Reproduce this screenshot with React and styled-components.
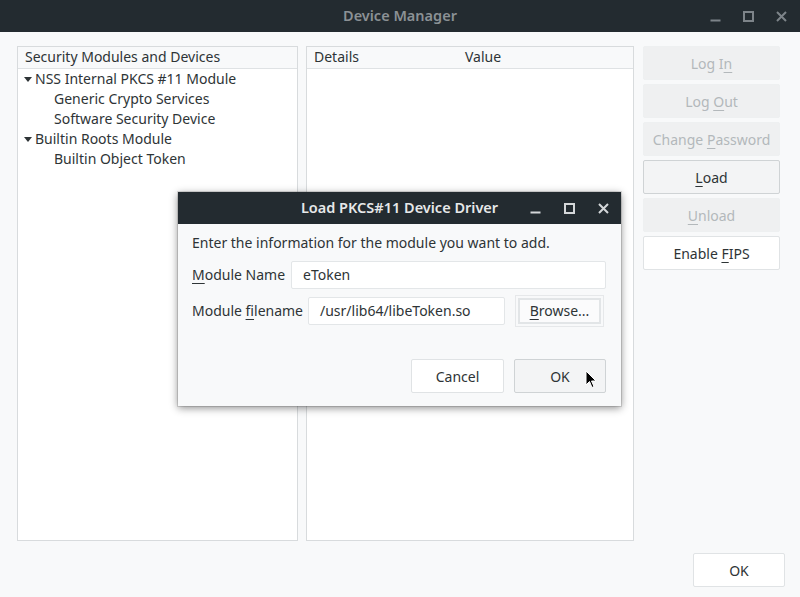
import React from "react";
import styled, { createGlobalStyle } from "styled-components";

const Global = createGlobalStyle`
  html, body { margin: 0; padding: 0; }
  body { font-family: "Noto Sans", "Open Sans", sans-serif; background: #f8f9fa; }
`;

const Window = styled.div`
  position: relative;
  width: 800px;
  height: 597px;
  background: #f8f9fa;
  display: flex;
  flex-direction: column;
  overflow: hidden;
  font-size: 14px;
  color: #2e3436;
`;

const TitleBar = styled.div`
  height: 32px;
  flex: none;
  box-sizing: border-box;
  padding-bottom: 2px;
  background: ${(p) => p.$bg || "#232b30"};
  color: ${(p) => p.$fg || "#8b9195"};
  display: flex;
  align-items: center;
  justify-content: center;
  position: relative;
  font-size: 14.5px;
  font-weight: 600;
`;

const TitleText = styled.span`
  margin-left: ${(p) => p.$offset || 0}px;
`;

const Controls = styled.div`
  position: absolute;
  right: ${(p) => p.$right || 12}px;
  top: 0;
  height: 100%;
  display: flex;
  align-items: center;
  gap: ${(p) => p.$gap || 23}px;
  color: ${(p) => p.$color || "#7d8489"};
`;

const Icon = styled.svg`
  width: 11px;
  height: 11px;
  display: block;
`;

const WinControls = ({ color, right, gap }) => (
  <Controls $color={color} $right={right} $gap={gap}>
    <Icon viewBox="0 0 11 11">
      <rect x="0.5" y="8.5" width="10" height="2" fill="currentColor" />
    </Icon>
    <Icon viewBox="0 0 11 11">
      <rect x="1" y="1" width="9" height="9" fill="none" stroke="currentColor" strokeWidth="2" />
    </Icon>
    <Icon viewBox="0 0 11 11">
      <path d="M1 1 L10 10 M10 1 L1 10" stroke="currentColor" strokeWidth="2" />
    </Icon>
  </Controls>
);

const Body = styled.div`
  flex: 1;
  display: flex;
  flex-direction: column;
  padding: 14px 16px 11px 17px;
`;

const Main = styled.div`
  display: flex;
  height: 495px;
`;

const Panel = styled.div`
  width: ${(p) => p.$w}px;
  margin-right: ${(p) => p.$mr || 0}px;
  background: #ffffff;
  border: 1px solid #d8dbdd;
  box-sizing: border-box;
  display: flex;
  flex-direction: column;
`;

const HeaderRow = styled.div`
  height: 22px;
  box-sizing: border-box;
  padding-bottom: 3px;
  background: #f8f9fa;
  border-bottom: 1px solid #dfe2e4;
  display: flex;
  align-items: center;
  padding-left: 7px;
  color: #2e3436;
`;

const HeaderCell = styled.span`
  width: ${(p) => (p.$w ? p.$w + "px" : "auto")};
`;

const Tree = styled.div`
  display: flex;
  flex-direction: column;
`;

const Row = styled.div`
  height: 20px;
  box-sizing: border-box;
  padding-bottom: 2px;
  display: flex;
  align-items: center;
  padding-left: ${(p) => (p.$level ? 36 : 6)}px;
  color: #2e3436;
`;

const Expander = styled.span`
  width: 0;
  height: 0;
  border-left: 4.5px solid transparent;
  border-right: 4.5px solid transparent;
  border-top: 5px solid #2e3436;
  margin-right: 3px;
  margin-top: 2px;
`;

const Buttons = styled.div`
  margin-left: 9px;
  width: 137px;
  display: flex;
  flex-direction: column;
  gap: 4px;
`;

const Button = styled.div`
  height: ${(p) => p.$h || 34}px;
  width: ${(p) => (p.$w ? p.$w + "px" : "auto")};
  box-sizing: border-box;
  display: flex;
  align-items: center;
  justify-content: center;
  border-radius: 2px;
  border: 1px solid
    ${(p) =>
      p.$variant === "disabled"
        ? "#eef0f1"
        : p.$variant === "active"
        ? "#cfd3d5"
        : "#e0e3e5"};
  background: ${(p) =>
    p.$variant === "disabled"
      ? "#eff0f1"
      : p.$variant === "active"
      ? "#f3f4f5"
      : "#ffffff"};
  color: ${(p) => (p.$variant === "disabled" ? "#b3b8bb" : "#2e3436")};
  font-size: 14px;
`;

const U = styled.u`
  text-decoration-thickness: 1px;
  text-underline-offset: 3px;
`;

const Footer = styled.div`
  display: flex;
  justify-content: flex-end;
  margin-top: 12px;
  margin-right: -1px;
`;

const Dialog = styled.div`
  position: absolute;
  left: 178px;
  top: 192px;
  width: 443px;
  height: 214px;
  background: #f8f9fa;
  box-shadow: 0 2px 8px rgba(0, 0, 0, 0.45), 0 0 0 1px rgba(0, 0, 0, 0.12);
  display: flex;
  flex-direction: column;
`;

const DialogBody = styled.div`
  padding: 8px 15px 13px 14px;
  display: flex;
  flex-direction: column;
  flex: 1;
`;

const Intro = styled.div`
  height: 22px;
  box-sizing: border-box;
  padding-bottom: 2px;
  display: flex;
  align-items: center;
  margin-bottom: 7px;
`;

const FieldRow = styled.div`
  display: flex;
  align-items: center;
  margin-bottom: ${(p) => p.$mb || 0}px;
`;

const Label = styled.span`
  width: ${(p) => p.$w}px;
  flex: none;
  padding-bottom: 2px;
`;

const Input = styled.div`
  width: ${(p) => p.$w}px;
  height: 28px;
  box-sizing: border-box;
  border: 1px solid #e3e6e8;
  background: #ffffff;
  display: flex;
  align-items: center;
  padding-left: 11px;
  padding-bottom: 2px;
  border-radius: 2px;
`;

const BrowseFrame = styled.div`
  margin-left: 10px;
  padding: 2px;
  border: 1px solid #e6e8ea;
  background: #f8f9fa;
`;

const BrowseButton = styled.div`
  width: 83px;
  height: 26px;
  box-sizing: border-box;
  padding-bottom: 2px;
  border: 2px solid #e2e5e7;
  background: #fbfbfc;
  display: flex;
  align-items: center;
  justify-content: center;
`;

const DialogActions = styled.div`
  margin-top: auto;
  display: flex;
  justify-content: flex-end;
  gap: 10px;
`;

const Cursor = styled.svg`
  position: absolute;
  left: 585px;
  top: 370px;
  width: 12px;
  height: 19px;
`;

export default function App() {
  return (
    <Window>
      <Global />
      <TitleBar>
        <TitleText>Device Manager</TitleText>
        <WinControls right={13} gap={22} />
      </TitleBar>
      <Body>
        <Main>
          <Panel $w={281} $mr={8}>
            <HeaderRow>Security Modules and Devices</HeaderRow>
            <Tree>
              <Row>
                <Expander />
                NSS Internal PKCS #11 Module
              </Row>
              <Row $level={1}>Generic Crypto Services</Row>
              <Row $level={1}>Software Security Device</Row>
              <Row>
                <Expander />
                Builtin Roots Module
              </Row>
              <Row $level={1}>Builtin Object Token</Row>
            </Tree>
          </Panel>
          <Panel $w={328}>
            <HeaderRow>
              <HeaderCell $w={151}>Details</HeaderCell>
              <HeaderCell>Value</HeaderCell>
            </HeaderRow>
          </Panel>
          <Buttons>
            <Button $variant="disabled">
              <span>
                Log I<U>n</U>
              </span>
            </Button>
            <Button $variant="disabled">
              <span>
                Log <U>O</U>ut
              </span>
            </Button>
            <Button $variant="disabled">
              <span>
                Change <U>P</U>assword
              </span>
            </Button>
            <Button $variant="active">
              <span>
                <U>L</U>oad
              </span>
            </Button>
            <Button $variant="disabled">
              <span>
                <U>U</U>nload
              </span>
            </Button>
            <Button>
              <span>
                Enable <U>F</U>IPS
              </span>
            </Button>
          </Buttons>
        </Main>
        <Footer>
          <Button $w={92}>OK</Button>
        </Footer>
      </Body>

      <Dialog>
        <TitleBar $bg="#232b30" $fg="#e6e8e9">
          <TitleText $offset={0}>Load PKCS#11 Device Driver</TitleText>
          <WinControls color="#d4d7d9" right={12} gap={23} />
        </TitleBar>
        <DialogBody>
          <Intro>Enter the information for the module you want to add.</Intro>
          <FieldRow $mb={6}>
            <Label $w={99}>
              <U>M</U>odule Name
            </Label>
            <Input $w={316}>eToken</Input>
          </FieldRow>
          <FieldRow>
            <Label $w={116}>
              Module <U>f</U>ilename
            </Label>
            <Input $w={197}>/usr/lib64/libeToken.so</Input>
            <BrowseFrame>
              <BrowseButton>
                <span>
                  <U>B</U>rowse...
                </span>
              </BrowseButton>
            </BrowseFrame>
          </FieldRow>
          <DialogActions>
            <Button $w={93}>Cancel</Button>
            <Button $w={92} $variant="active">
              OK
            </Button>
          </DialogActions>
        </DialogBody>
      </Dialog>

      <Cursor viewBox="0 0 12 19">
        <path
          d="M1 1 L1 15 L4.5 11.5 L7 17.5 L9 16.5 L6.5 11 L11 11 Z"
          fill="#000"
          stroke="#fff"
          strokeWidth="1"
          strokeLinejoin="round"
        />
      </Cursor>
    </Window>
  );
}
